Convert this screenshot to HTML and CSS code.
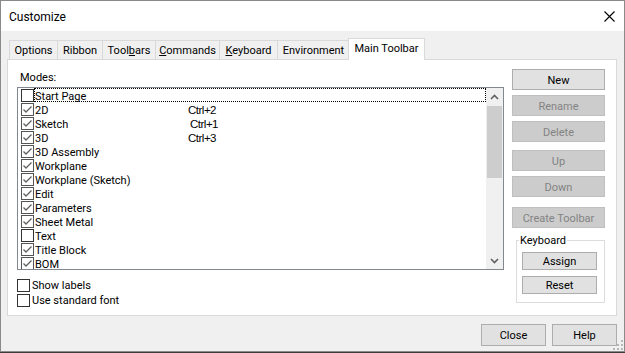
FILE: index.html
```html
<!DOCTYPE html>
<html lang="en">

<head>
    <meta charset="UTF-8">
    <title>Customize</title>
    <link rel="stylesheet" href="styles.css">
</head>

<body>
    <div class="window">
        <div class="titlebar">
            <span class="title">Customize</span>
            <svg class="close-icon" width="11" height="11" viewBox="0 0 11 11">
                <path d="M0.5 0.5 L10.5 10.5 M10.5 0.5 L0.5 10.5" stroke="#000" stroke-width="1.1" fill="none"/>
            </svg>
        </div>

        <div class="client">
            <div class="tabs">
                <div class="tab tab-options">Options</div>
                <div class="tab tab-ribbon">Ribbon</div>
                <div class="tab tab-toolbars">Tool<u>b</u>ars</div>
                <div class="tab tab-commands"><u>C</u>ommands</div>
                <div class="tab tab-keyboard"><u>K</u>eyboard</div>
                <div class="tab tab-environment">Environment</div>
                <div class="tab tab-main selected">Main Toolbar</div>
            </div>

            <div class="panel">
                <div class="left-col">
                    <div class="modes-label">Modes:</div>
                    <div class="listbox">
                        <div class="rows">
                            <div class="row"><span class="checkbox"></span><span class="row-text focused"><span class="name">Start Page</span></span></div>
                            <div class="row"><span class="checkbox checked"></span><span class="row-text"><span class="name">2D</span><span class="shortcut">Ctrl+2</span></span></div>
                            <div class="row"><span class="checkbox checked"></span><span class="row-text"><span class="name">Sketch</span><span class="shortcut nudge">Ctrl+1</span></span></div>
                            <div class="row"><span class="checkbox checked"></span><span class="row-text"><span class="name">3D</span><span class="shortcut">Ctrl+3</span></span></div>
                            <div class="row"><span class="checkbox checked"></span><span class="row-text"><span class="name">3D Assembly</span></span></div>
                            <div class="row"><span class="checkbox checked"></span><span class="row-text"><span class="name">Workplane</span></span></div>
                            <div class="row"><span class="checkbox checked"></span><span class="row-text"><span class="name">Workplane (Sketch)</span></span></div>
                            <div class="row"><span class="checkbox checked"></span><span class="row-text"><span class="name">Edit</span></span></div>
                            <div class="row"><span class="checkbox checked"></span><span class="row-text"><span class="name">Parameters</span></span></div>
                            <div class="row"><span class="checkbox checked"></span><span class="row-text"><span class="name">Sheet Metal</span></span></div>
                            <div class="row"><span class="checkbox"></span><span class="row-text"><span class="name">Text</span></span></div>
                            <div class="row"><span class="checkbox checked"></span><span class="row-text"><span class="name">Title Block</span></span></div>
                            <div class="row"><span class="checkbox checked"></span><span class="row-text"><span class="name">BOM</span></span></div>
                        </div>
                        <div class="scrollbar">
                            <div class="sb-btn">
                                <svg width="9" height="6" viewBox="0 0 9 6"><path d="M1 5 L4.5 1.5 L8 5" stroke="#606060" stroke-width="1.6" fill="none"/></svg>
                            </div>
                            <div class="sb-track"><div class="sb-thumb"></div></div>
                            <div class="sb-btn">
                                <svg width="9" height="6" viewBox="0 0 9 6"><path d="M1 1 L4.5 4.5 L8 1" stroke="#606060" stroke-width="1.6" fill="none"/></svg>
                            </div>
                        </div>
                    </div>
                    <div class="options">
                        <div class="option"><span class="checkbox"></span><span>Show labels</span></div>
                        <div class="option"><span class="checkbox"></span><span>Use standard font</span></div>
                    </div>
                </div>

                <div class="right-col">
                    <button class="btn btn-new">New</button>
                    <button class="btn btn-rename" disabled>Rename</button>
                    <button class="btn btn-delete" disabled>Delete</button>
                    <button class="btn btn-up" disabled>Up</button>
                    <button class="btn btn-down" disabled>Down</button>
                    <button class="btn btn-create" disabled>Create Toolbar</button>
                    <fieldset class="group">
                        <legend>Keyboard</legend>
                        <div class="group-body">
                            <button class="btn btn-small">Assign</button>
                            <button class="btn btn-small btn-reset">Reset</button>
                        </div>
                    </fieldset>
                </div>
            </div>

            <div class="footer">
                <button class="btn btn-footer">Close</button>
                <button class="btn btn-footer">Help</button>
            </div>
        </div>

        <svg class="grip" width="10" height="10" viewBox="0 0 10 10">
            <rect x="8" y="0" width="2" height="2" fill="#b8b8b8"/>
            <rect x="4" y="4" width="2" height="2" fill="#b8b8b8"/>
            <rect x="8" y="4" width="2" height="2" fill="#b8b8b8"/>
            <rect x="0" y="8" width="2" height="2" fill="#b8b8b8"/>
            <rect x="4" y="8" width="2" height="2" fill="#b8b8b8"/>
            <rect x="8" y="8" width="2" height="2" fill="#b8b8b8"/>
        </svg>
    </div>
</body>

</html>
```

FILE: styles.css
```css
* {
    box-sizing: border-box;
}

body {
    margin: 0;
    background-color: #3c3c3c;
    font-family: "Segoe UI", Roboto, "Noto Sans", sans-serif;
    font-size: 11px;
    color: #000;
}

.window {
    position: relative;
    width: 625px;
    height: 352px;
    border: 1px solid #8a8a8a;
    background-color: #f0f0f0;
    display: flex;
    flex-direction: column;
}

.titlebar {
    height: 30px;
    flex: 0 0 30px;
    background-color: #fff;
    display: flex;
    align-items: center;
    justify-content: space-between;
    padding: 0 9px 0 8px;
}

.title {
    font-size: 12px;
    padding-top: 1px;
}

.client {
    flex: 1;
    display: flex;
    flex-direction: column;
    padding: 7px 7px 0 6px;
}

/* tabs */
.tabs {
    display: flex;
    align-items: flex-end;
    height: 21px;
    padding-left: 2px;
}

.tab {
    height: 19px;
    line-height: 19px;
    text-align: center;
    border: 1px solid #d9d9d9;
    border-bottom: none;
    background-color: #f0f0f0;
    margin-left: -1px;
    white-space: nowrap;
}

.tab:first-child {
    margin-left: 0;
}

.tab-options { width: 49px; }
.tab-ribbon { width: 46px; }
.tab-toolbars { width: 54px; }
.tab-commands { width: 65px; }
.tab-keyboard { width: 59px; }
.tab-environment { width: 73px; }

.tab.selected {
    position: relative;
    z-index: 1;
    width: 77px;
    height: 22px;
    margin-left: -2px;
    margin-bottom: -1px;
    padding-bottom: 3px;
    background-color: #fff;
}

/* panel */
.panel {
    height: 257px;
    border: 1px solid #d9d9d9;
    background-color: #fff;
    display: flex;
    padding: 9px 0 0 9px;
}

.left-col {
    width: 487px;
    margin-top: 1px;
}

.modes-label {
    height: 14px;
    line-height: 16px;
    padding-left: 3px;
    margin-bottom: 3px;
}

.listbox {
    height: 183px;
    border: 1px solid #828790;
    display: flex;
}

.rows {
    flex: 1;
    overflow: hidden;
}

.row {
    height: 14px;
    display: flex;
    align-items: flex-end;
}

.checkbox {
    flex: 0 0 13px;
    width: 13px;
    height: 13px;
    border: 1px solid #333;
    background-color: #fff;
}

.checkbox.checked {
    background-image: url("data:image/svg+xml,%3Csvg xmlns='http://www.w3.org/2000/svg' width='11' height='11' viewBox='0 0 11 11'%3E%3Cpath d='M1.5 5.5 L4 8 L9.5 2.5' stroke='%23606060' stroke-width='1.3' fill='none'/%3E%3C/svg%3E");
    background-repeat: no-repeat;
    border-color: #555;
}

.row .checkbox {
    margin-left: 3px;
}

.row-text {
    flex: 1;
    height: 14px;
    display: flex;
    padding-top: 1px;
    line-height: 13px;
    border: 1px dotted transparent;
    white-space: nowrap;
}

.row-text.focused {
    border-color: #000;
}

.name {
    width: 153px;
}

.shortcut {
    font-family: "Liberation Sans", sans-serif;
    font-size: 11.5px;
    letter-spacing: -0.5px;
}

.shortcut.nudge {
    padding-left: 2px;
}

.scrollbar {
    width: 17px;
    background-color: #f0f0f0;
    display: flex;
    flex-direction: column;
}

.sb-btn {
    height: 17px;
    display: flex;
    align-items: center;
    justify-content: center;
}

.sb-track {
    flex: 1;
    padding: 1px 1px 0;
}

.sb-thumb {
    height: 72px;
    background-color: #cdcdcd;
}

.options {
    margin-top: 8px;
}

.option {
    height: 15px;
    line-height: 16px;
    display: flex;
    align-items: center;
    gap: 2px;
}

/* right column */
.right-col {
    width: 93px;
    margin-left: 8px;
    display: flex;
    flex-direction: column;
}

.btn {
    font-family: inherit;
    font-size: 11px;
    color: #000;
    background-color: #e1e1e1;
    border: 1px solid #adadad;
    padding: 1px 0 0;
    height: 21px;
    border-radius: 0;
}

.btn:disabled {
    background-color: #cccccc;
    border-color: #bfbfbf;
    color: #838383;
}

.btn-rename,
.btn-delete,
.btn-down {
    margin-top: 5px;
}

.btn-up {
    margin-top: 8px;
}

.btn-create {
    margin-top: 10px;
}

.group {
    width: 89px;
    margin: 5px 0 0 4px;
    padding: 0;
    border: 1px solid #dcdcdc;
}

.group legend {
    margin-left: 2px;
    padding: 1px 1px 0;
    line-height: 14px;
}

.group-body {
    display: flex;
    flex-direction: column;
    padding: 4px 0 8px 5px;
}

.btn-small {
    width: 75px;
    height: 18px;
}

.btn-reset {
    margin-top: 6px;
}

/* footer */
.footer {
    display: flex;
    justify-content: flex-end;
    gap: 6px;
    padding-top: 8px;
}

.btn-footer {
    width: 65px;
    height: 22px;
}

.grip {
    position: absolute;
    right: 1px;
    bottom: 1px;
}
```
